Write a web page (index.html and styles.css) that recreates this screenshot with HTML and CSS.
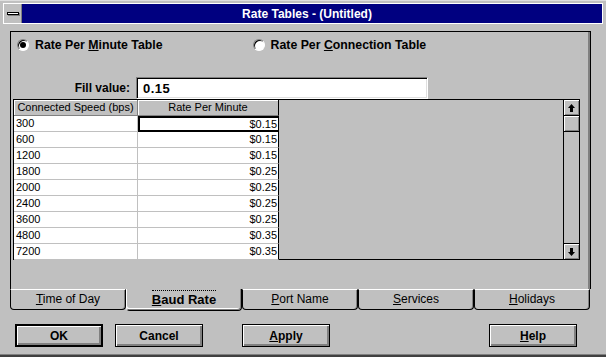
FILE: index.html
```html
<!DOCTYPE html>
<html lang="en">
<head>
    <meta charset="UTF-8">
    <title>Rate Tables - (Untitled)</title>
    <link rel="stylesheet" href="styles.css">
</head>
<body>
    <div class="window">
        <!-- Title bar -->
        <div class="titlebar">
            <div class="sysmenu"><span class="sysmenu-dash"></span></div>
            <div class="caption">Rate Tables - (Untitled)</div>
        </div>

        <!-- Tab page -->
        <div class="tabpage">
            <div class="radio-row">
                <label class="radio checked">
                    <span class="radio-dot"></span>
                    <span>Rate Per <u>M</u>inute Table</span>
                </label>
                <label class="radio second">
                    <span class="radio-dot"></span>
                    <span>Rate Per <u>C</u>onnection Table</span>
                </label>
            </div>

            <div class="fill-row">
                <div class="fill-label">Fill value:</div>
                <div class="fill-input">0.15</div>
            </div>

            <div class="grid-frame">
                <div class="grid">
                    <div class="head">Connected Speed (bps)</div>
                    <div class="head last">Rate Per Minute</div>

                    <div class="cell">300</div>
                    <div class="cell num last selected">$0.15</div>
                    <div class="cell">600</div>
                    <div class="cell num last">$0.15</div>
                    <div class="cell">1200</div>
                    <div class="cell num last">$0.15</div>
                    <div class="cell">1800</div>
                    <div class="cell num last">$0.25</div>
                    <div class="cell">2000</div>
                    <div class="cell num last">$0.25</div>
                    <div class="cell">2400</div>
                    <div class="cell num last">$0.25</div>
                    <div class="cell">3600</div>
                    <div class="cell num last">$0.25</div>
                    <div class="cell">4800</div>
                    <div class="cell num last">$0.35</div>
                    <div class="cell">7200</div>
                    <div class="cell num last">$0.35</div>
                </div>
                <div class="grid-empty"></div>
                <div class="scrollbar">
                    <div class="sb-btn">
                        <svg width="7" height="8" viewBox="0 0 7 8"><polygon points="3.5,0 7,4 5,4 5,8 2,8 2,4 0,4" fill="#000"/></svg>
                    </div>
                    <div class="sb-thumb"></div>
                    <div class="sb-track"></div>
                    <div class="sb-btn">
                        <svg width="7" height="8" viewBox="0 0 7 8"><polygon points="3.5,8 7,4 5,4 5,0 2,0 2,4 0,4" fill="#000"/></svg>
                    </div>
                </div>
            </div>
        </div>

        <!-- Tabs -->
        <div class="tabs">
            <div class="tab"><span><u>T</u>ime of Day</span></div>
            <div class="tab active"><span class="focus"><u>B</u>aud Rate</span></div>
            <div class="tab"><span><u>P</u>ort Name</span></div>
            <div class="tab"><span><u>S</u>ervices</span></div>
            <div class="tab"><span><u>H</u>olidays</span></div>
        </div>

        <!-- Buttons -->
        <div class="buttons">
            <button class="btn default">OK</button>
            <button class="btn">Cancel</button>
            <button class="btn apply"><u>A</u>pply</button>
            <button class="btn help"><u>H</u>elp</button>
        </div>
    </div>
</body>
</html>
```

FILE: styles.css
```css
:root {
    --face: #c0c0c0;
    --shadow: #808080;
    --light: #ffffff;
    --dark: #000000;
    --navy: #000080;
}

* {
    box-sizing: border-box;
}

body {
    margin: 0;
    background: var(--face);
    font-family: 'Liberation Sans', Arial, sans-serif;
    font-size: 12px;
    color: #000;
}

.window {
    width: 606px;
    height: 357px;
    background: var(--face);
    border-top: 1px solid #dfdfdf;
    border-bottom: 2px solid #404040;
    box-shadow: inset 0 -1px 0 var(--shadow);
    overflow: hidden;
}

/* Title bar */
.titlebar {
    display: flex;
    height: 21px;
    margin: 2px 3px 0 3px;
    border: 1px solid var(--light);
    border-left: none;
}

.sysmenu {
    width: 19px;
    border-left: 1px solid var(--light);
    border-right: 1px solid var(--shadow);
    display: flex;
    align-items: center;
    justify-content: center;
}

.sysmenu-dash {
    width: 12px;
    height: 3px;
    background: var(--light);
    border: 1px solid var(--dark);
    box-shadow: 1px 1px 0 var(--shadow);
}

.caption {
    flex: 1;
    background: var(--navy);
    color: #fff;
    font-weight: 700;
    font-size: 12px;
    display: flex;
    align-items: center;
    justify-content: center;
    padding-right: 10px;
}

/* Tab page */
.tabpage {
    margin: 7px 0 0 10px;
    width: 581px;
    height: 258px;
    border: 1px solid var(--dark);
    border-bottom: none;
    box-shadow: inset -2px 0 0 var(--shadow);
}

.radio-row {
    display: flex;
    align-items: center;
    height: 16px;
    margin-top: 5px;
    padding-left: 6px;
    font-weight: 700;
    font-size: 12.3px;
}

.radio {
    display: flex;
    align-items: center;
    gap: 6px;
}

.radio.second {
    margin-left: 90px;
}

.radio-dot {
    width: 12px;
    height: 12px;
    border-radius: 50%;
    background: #fff;
    border: 1px solid;
    border-color: var(--shadow) var(--light) var(--light) var(--shadow);
    box-shadow: inset 1px 1px 0 var(--dark);
    display: flex;
    align-items: center;
    justify-content: center;
}

.radio.checked .radio-dot::after {
    content: "";
    width: 6px;
    height: 6px;
    border-radius: 50%;
    background: #000;
}

.fill-row {
    display: flex;
    align-items: center;
    margin-top: 24px;
}

.fill-label {
    width: 119px;
    text-align: right;
    font-weight: 700;
}

.fill-input {
    margin-left: 6px;
    width: 292px;
    height: 22px;
    background: #fff;
    border: 1px solid;
    border-color: var(--shadow) var(--light) var(--light) var(--shadow);
    box-shadow: inset 1px 1px 0 var(--dark), inset -1px -1px 0 #dfdfdf;
    font-weight: 700;
    font-size: 13px;
    letter-spacing: 0.5px;
    padding: 3px 0 0 6px;
}

/* Grid */
.grid-frame {
    display: flex;
    margin-left: 2px;
    width: 567px;
    height: 161px;
    border: 1px solid var(--dark);
}

.grid {
    display: grid;
    grid-template-columns: 124px 141px;
    grid-auto-rows: 16px;
    align-content: start;
    background: #fff;
    font-size: 11px;
}

.head {
    background: var(--face);
    border-right: 1px solid var(--shadow);
    border-bottom: 1px solid var(--shadow);
    box-shadow: inset 1px 1px 0 var(--light);
    text-align: center;
    line-height: 15px;
}

.head.last {
    border-right-color: var(--dark);
}

.cell {
    border-right: 1px solid var(--face);
    border-bottom: 1px solid var(--face);
    line-height: 15px;
    padding-left: 2px;
}

.cell.last {
    border-right-color: var(--dark);
}

.cell.num {
    text-align: right;
    padding-right: 1px;
}

.cell.selected {
    border: 2px solid var(--dark);
    border-right-width: 1px;
    line-height: 12px;
}

.grid-empty {
    flex: 1;
}

.scrollbar {
    width: 16px;
    border-left: 1px solid var(--dark);
    display: flex;
    flex-direction: column;
}

.sb-btn,
.sb-thumb {
    height: 16px;
    background: var(--face);
    border-bottom: 1px solid var(--dark);
    box-shadow: inset 1px 1px 0 var(--light), inset -1px -1px 0 var(--shadow);
    display: flex;
    align-items: center;
    justify-content: center;
}

.sb-btn:last-child {
    border-bottom: none;
    border-top: 1px solid var(--dark);
}

.sb-track {
    flex: 1;
}

/* Tabs */
.tabs {
    display: grid;
    grid-template-columns: repeat(5, 116px);
    margin-left: 10px;
    height: 22px;
}

.tab {
    height: 21px;
    border: 1px solid var(--dark);
    border-top: 1px solid var(--light);
    border-radius: 0 0 4px 4px;
    box-shadow: inset -1px 0 0 var(--shadow);
    display: flex;
    align-items: center;
    justify-content: center;
    padding-bottom: 1px;
}

.tab.active {
    height: 22px;
    border-top: none;
    border-left: 1px solid var(--light);
    box-shadow: inset -1px -1px 0 var(--shadow), inset 0 -2px 0 var(--light);
    font-weight: 700;
    font-size: 13px;
    padding-bottom: 3px;
}

.focus {
    border-top: 1px dotted var(--dark);
    padding-top: 1px;
}

/* Buttons */
.buttons {
    display: flex;
    margin-top: 13px;
    padding-left: 15px;
}

.btn {
    width: 88px;
    height: 23px;
    margin-right: 12px;
    background: var(--face);
    border: 1px solid var(--dark);
    box-shadow: inset 1px 1px 0 var(--light), inset -2px -2px 0 var(--shadow);
    font-family: 'Liberation Sans', Arial, sans-serif;
    font-weight: 700;
    font-size: 12px;
    color: #000;
    padding: 0;
}

.btn.default {
    border-width: 2px;
}

.btn.apply {
    margin-left: 27px;
}

.btn.help {
    margin-left: 147px;
}
```
